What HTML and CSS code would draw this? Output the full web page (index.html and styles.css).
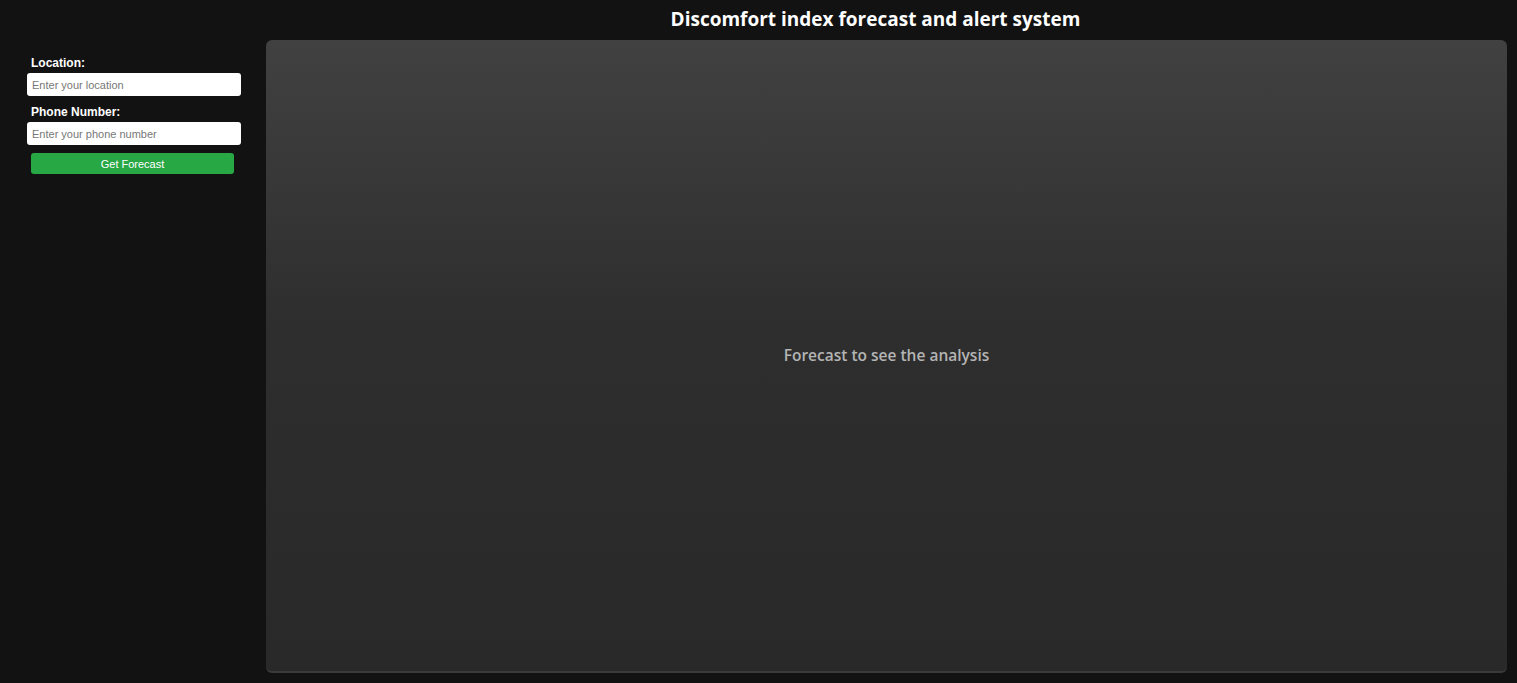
FILE: index.html
```html
<!DOCTYPE html>
<html lang="en">
<head>
<meta charset="utf-8">
<title>Discomfort index forecast and alert system</title>
<link rel="stylesheet" href="styles.css">
</head>
<body>
<div class="layout">
  <aside class="sidebar">
    <form class="form">
      <label class="label" for="loc">Location:</label>
      <input class="input" id="loc" type="text" placeholder="Enter your location">
      <label class="label" for="phone">Phone Number:</label>
      <input class="input" id="phone" type="text" placeholder="Enter your phone number">
      <button class="btn" type="button">Get Forecast</button>
    </form>
  </aside>
  <main class="main">
    <h1 class="title">Discomfort index forecast and alert system</h1>
    <section class="panel">
      <p class="placeholder">Forecast to see the analysis</p>
    </section>
  </main>
</div>
</body>
</html>
```

FILE: styles.css
```css
* { box-sizing: border-box; }
html, body { height: 100%; }
body {
  margin: 0;
  background: #121212;
  color: #fff;
  font-family: "Liberation Sans", Arial, sans-serif;
}
.layout {
  display: grid;
  grid-template-columns: 266px 1fr;
  height: 100vh;
}
.sidebar {
  padding: 55px 25px 0 27px;
}
.form {
  display: flex;
  flex-direction: column;
}
.label {
  font-size: 12px;
  font-weight: bold;
  line-height: 15px;
  padding-left: 4px;
  padding-top: 1px;
  margin-bottom: 2px;
}
.input {
  width: 214px;
  height: 23px;
  border: none;
  border-radius: 3px;
  background: #fff;
  padding: 0 5px;
  font-family: "Liberation Sans", Arial, sans-serif;
  font-size: 11px;
  color: #333;
  margin-bottom: 8px;
  outline: none;
}
.input::placeholder { color: #777; }
.btn {
  width: 203px;
  height: 21px;
  margin: 0 0 0 4px;
  border: none;
  border-radius: 3px;
  background: #28a745;
  color: #fff;
  font-family: "Liberation Sans", Arial, sans-serif;
  font-size: 11px;
  padding: 0;
}
.main {
  display: flex;
  flex-direction: column;
  padding: 0 10px 10px 0;
  min-height: 0;
}
.title {
  margin: 0;
  height: 40px;
  line-height: 39px;
  text-align: center;
  font-family: "Open Sans", sans-serif;
  font-weight: 700;
  font-size: 19px;
  color: #fff;
  padding-right: 22px;
}
.panel {
  flex: 1;
  border-radius: 6px;
  background: linear-gradient(to bottom, #414141 0%, #2e2e2e 45%, #292929 100%);
  border-bottom: 2px solid #3a3a3a;
  display: flex;
  align-items: center;
  justify-content: center;
}
.placeholder {
  margin: 0;
  font-family: "Open Sans", sans-serif;
  font-weight: 600;
  font-size: 15.5px;
  color: #b4b4b4;
  transform: translateY(-1px);
}
```
